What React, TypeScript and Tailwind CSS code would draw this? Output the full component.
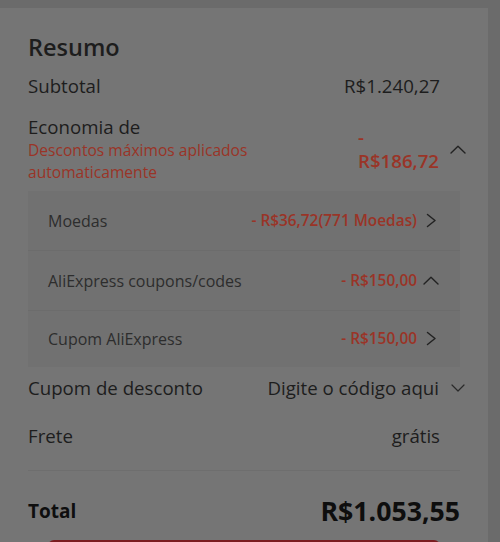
import React from 'react';

function ChevronUp({ className }: { className?: string }) {
  return (
    <svg width="16" height="9" viewBox="0 0 16 9" className={className} fill="none" stroke="currentColor" strokeWidth="1.4" strokeLinecap="round" strokeLinejoin="round">
      <polyline points="1,8 8,1.2 15,8" />
    </svg>
  );
}

function ChevronDown({ className }: { className?: string }) {
  return (
    <svg width="14" height="8" viewBox="0 0 14 8" className={className} fill="none" stroke="currentColor" strokeWidth="1.2" strokeLinecap="round" strokeLinejoin="round">
      <polyline points="1,1 7,7 13,1" />
    </svg>
  );
}

function ChevronRight({ className }: { className?: string }) {
  return (
    <svg width="11" height="15" viewBox="0 0 11 15" className={className} fill="none" stroke="currentColor" strokeWidth="1.5" strokeLinecap="round" strokeLinejoin="round">
      <polyline points="1.5,1.5 9,7.5 1.5,13.5" />
    </svg>
  );
}

const discounts = [
  { label: 'Moedas', value: '- R$36,72(771 Moedas)', up: false },
  { label: 'AliExpress coupons/codes', value: '- R$150,00', up: true },
  { label: 'Cupom AliExpress', value: '- R$150,00', up: false },
];

export default function App() {
  return (
    <div
      className="w-[500px] h-[542px] overflow-hidden bg-[#6b6b6b] pt-2 text-[#1d1d1d]"
      style={{ fontFamily: '"Open Sans", "Noto Sans", sans-serif' }}
    >
      <div className="w-[488px] min-h-[560px] bg-[#757575] px-7 pt-[24px]">
        <h2 className="text-[23.5px] leading-[30px] font-semibold">Resumo</h2>

        <div className="mt-[12px] flex items-center justify-between text-[18.67px] leading-[24px]">
          <span>Subtotal</span>
          <span className="pr-5">R$1.240,27</span>
        </div>

        <div className="mt-[17px] flex items-center justify-between">
          <div>
            <div className="text-[18.67px] leading-[24px]">Economia de</div>
            <div className="w-[250px] text-[15.6px] leading-[22px] text-[#9a3427]">
              Descontos máximos aplicados automaticamente
            </div>
          </div>
          <div className="flex items-center">
            <div className="text-[18.67px] leading-[24px] font-semibold text-[#9a3427]">
              <div>-</div>
              <div>R$186,72</div>
            </div>
            <ChevronUp className="ml-[11px] mr-[-6px] text-[#222]" />
          </div>
        </div>

        <div className="mt-[8px] bg-[#717171]">
          {discounts.map((d, i) => (
            <div
              key={d.label}
              className={`flex items-center justify-between pl-5 pr-5 ${
                i === 2 ? 'h-[56px]' : 'h-[60px] border-b border-[#6c6c6c]'
              }`}
            >
              <span className="text-[16px] text-[#2d2d2d]">{d.label}</span>
              <div className="flex items-center">
                <span className="text-[15.4px] font-semibold text-[#9a3427]">{d.value}</span>
                <div className="flex w-[23px] items-center">
                  {d.up ? (
                    <ChevronUp className="ml-[6px] text-[#222]" />
                  ) : (
                    <ChevronRight className="ml-[9px] text-[#222]" />
                  )}
                </div>
              </div>
            </div>
          ))}
        </div>

        <div className="flex h-[42px] items-center justify-between text-[18.67px]">
          <span>Cupom de desconto</span>
          <div className="flex items-center">
            <span>Digite o código aqui</span>
            <ChevronDown className="ml-[12px] mr-[-5px] text-[#2a2a2a]" />
          </div>
        </div>

        <div className="flex h-[54px] items-center justify-between text-[18.67px]">
          <span>Frete</span>
          <span className="pr-5">grátis</span>
        </div>

        <div className="mt-[7px] border-t border-[#6e6e6e]" />

        <div className="mt-[20px] flex h-[40px] items-center justify-between text-[#0e0e0e]">
          <span className="text-[19px] font-bold">Total</span>
          <span className="text-[26.67px] font-bold">R$1.053,55</span>
        </div>

        <button className="mt-[9px] ml-5 h-[44px] w-[392px] rounded-md bg-[#7a1d20]" />
      </div>
    </div>
  );
}
